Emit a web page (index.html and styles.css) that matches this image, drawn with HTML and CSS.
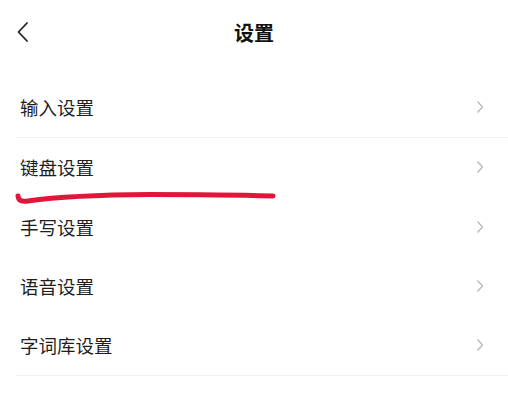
FILE: index.html
```html
<!DOCTYPE html>
<html>
<head>
<title>设置</title>
<link rel="stylesheet" href="styles.css">
</head>
<body>

<div class="page">
  <header class="top-bar">
    <svg class="back" width="14" height="22" viewBox="0 0 14 22">
      <path d="M11 2 L2.5 11 L11 20" fill="none" stroke="#222" stroke-width="1.8" stroke-linecap="round" stroke-linejoin="round"/>
    </svg>
    <h1 class="title">设置</h1>
  </header>

  <ul class="menu">
    <li class="row line">
      <span>输入设置</span>
      <svg class="arrow" width="10" height="14" viewBox="0 0 10 14"><path d="M2.5 1.5 L7.5 7 L2.5 12.5" fill="none" stroke="#b9b9b9" stroke-width="1.3" stroke-linejoin="round"/></svg>
    </li>
    <li class="row">
      <span>键盘设置</span>
      <svg class="arrow" width="10" height="14" viewBox="0 0 10 14"><path d="M2.5 1.5 L7.5 7 L2.5 12.5" fill="none" stroke="#b9b9b9" stroke-width="1.3" stroke-linejoin="round"/></svg>
    </li>
    <li class="row">
      <span>手写设置</span>
      <svg class="arrow" width="10" height="14" viewBox="0 0 10 14"><path d="M2.5 1.5 L7.5 7 L2.5 12.5" fill="none" stroke="#b9b9b9" stroke-width="1.3" stroke-linejoin="round"/></svg>
    </li>
    <li class="row">
      <span>语音设置</span>
      <svg class="arrow" width="10" height="14" viewBox="0 0 10 14"><path d="M2.5 1.5 L7.5 7 L2.5 12.5" fill="none" stroke="#b9b9b9" stroke-width="1.3" stroke-linejoin="round"/></svg>
    </li>
    <li class="row line">
      <span>字词库设置</span>
      <svg class="arrow" width="10" height="14" viewBox="0 0 10 14"><path d="M2.5 1.5 L7.5 7 L2.5 12.5" fill="none" stroke="#b9b9b9" stroke-width="1.3" stroke-linejoin="round"/></svg>
    </li>
  </ul>

  <!-- hand drawn mark under 键盘设置 -->
  <svg class="scribble" width="280" height="18" viewBox="0 0 280 18">
    <path d="M18 6 Q18.5 12.5 28 11 Q70 5 150 4.5 Q220 4.5 273 6" fill="none" stroke="#e2163a" stroke-width="5" stroke-linecap="round" stroke-linejoin="round"/>
  </svg>
</div>

</body>
</html>
```

FILE: styles.css
```css
body {
  margin: 0;
  background: #fff;
  font-family: "Noto Sans CJK SC", "Noto Sans", sans-serif;
  color: #222;
}

.page {
  position: relative;
  width: 508px;
  height: 400px;
  overflow: hidden;
}

.top-bar {
  position: relative;
  height: 78px;
  display: flex;
  align-items: flex-start;
  justify-content: center;
}

.back {
  position: absolute;
  left: 16px;
  top: 21px;
}

.title {
  margin: 0;
  padding-top: 19px;
  font-size: 20px;
  line-height: 28px;
  font-weight: 700;
  color: #111;
}

.menu {
  list-style: none;
  margin: 0;
  padding: 0 0 0 16px;
}

.row {
  height: 59.5px;
  box-sizing: border-box;
  display: flex;
  align-items: center;
  justify-content: space-between;
  padding: 0 23px 0 4px;
  font-size: 18.5px;
  color: #1e1e1e;
}

.row.line {
  border-bottom: 1px solid #f1f1f1;
}

.arrow {
  display: block;
}

.scribble {
  position: absolute;
  left: 0;
  top: 190px;
}
```
